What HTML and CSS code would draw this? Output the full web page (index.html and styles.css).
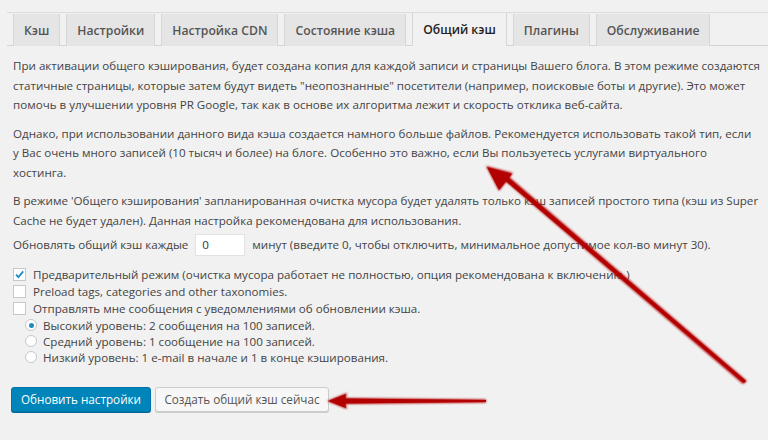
FILE: index.html
```html
<!DOCTYPE html>
<html lang="ru">
<head>
<meta charset="utf-8">
<title>WP Super Cache</title>
<link rel="stylesheet" href="styles.css">
</head>
<body>
<div class="page">
  <nav class="tabs">
    <span class="tab">Кэш</span>
    <span class="tab">Настройки</span>
    <span class="tab">Настройка CDN</span>
    <span class="tab">Состояние кэша</span>
    <span class="tab active">Общий кэш</span>
    <span class="tab">Плагины</span>
    <span class="tab">Обслуживание</span>
  </nav>
  <main class="content">
    <p>При активации общего кэширования, будет создана копия для каждой записи и страницы Вашего блога. В этом режиме создаются статичные страницы, которые затем будут видеть "неопознанные" посетители (например, поисковые боты и другие). Это может помочь в улучшении уровня PR Google, так как в основе их алгоритма лежит и скорость отклика веб-сайта.</p>
    <p>Однако, при использовании данного вида кэша создается намного больше файлов. Рекомендуется использовать такой тип, если у Вас очень много записей (10 тысяч и более) на блоге. Особенно это важно, если Вы пользуетесь услугами виртуального хостинга.</p>
    <p>В режиме 'Общего кэширования' запланированная очистка мусора будет удалять только кэш записей простого типа (кэш из Super Cache не будет удален). Данная настройка рекомендована для использования.</p>
    <p class="interval">Обновлять общий кэш каждые <span class="num-input">0</span> минут (введите 0, чтобы отключить, минимальное допустимое кол-во минут 30).</p>
    <div class="options">
      <label class="opt"><span class="cb checked"><svg viewBox="0 0 12 12" width="11" height="11"><path d="M2.2 6.2 L4.8 8.8 L10 2.6" fill="none" stroke="#1e8cbe" stroke-width="2"/></svg></span>Предварительный режим (очистка мусора работает не полностью, опция рекомендована к включению.)</label>
      <label class="opt"><span class="cb"></span>Preload tags, categories and other taxonomies.</label>
      <label class="opt"><span class="cb"></span>Отправлять мне сообщения с уведомлениями об обновлении кэша.</label>
      <label class="opt sub"><span class="rb checked"></span>Высокий уровень: 2 сообщения на 100 записей.</label>
      <label class="opt sub"><span class="rb"></span>Средний уровень: 1 сообщение на 100 записей.</label>
      <label class="opt sub"><span class="rb"></span>Низкий уровень: 1 e-mail в начале и 1 в конце кэширования.</label>
    </div>
    <div class="actions">
      <span class="btn primary">Обновить настройки</span>
      <span class="btn secondary">Создать общий кэш сейчас</span>
    </div>
  </main>
  <svg class="arrows" width="768" height="440" viewBox="0 0 768 440">
    <defs>
      <filter id="glow" x="-10%" y="-10%" width="120%" height="120%">
        <feGaussianBlur stdDeviation="0.8"/>
      </filter>
    </defs>
    <g fill="#b30000" filter="url(#glow)">
      <polygon points="486,166 513,173 499,191"/>
      <polygon points="504,180 508,176 747,381 743,384"/>
      <polygon points="327,401 347,393 345,401 347,409"/>
      <polygon points="343,398 486,399.5 486,402.5 343,404"/>
    </g>
    <g fill="#b30000">
      <polygon points="487,167 512,174 499,190"/>
      <polygon points="504.5,180 507.5,177 746,381 744,383"/>
      <polygon points="328,401 346,394 344.5,401 346,408"/>
      <polygon points="343,398.5 486,400 486,402 343,403.5"/>
    </g>
  </svg>
</div>
</body>
</html>
```
FILE: styles.css
```css
html, body {
  margin: 0;
  padding: 0;
  background: #f1f1f1;
}
.page {
  position: relative;
  width: 768px;
  height: 440px;
  overflow: hidden;
  font-family: "Open Sans", "Noto Sans", sans-serif;
  color: #444;
}
.tabs {
  display: flex;
  gap: 6px;
  margin: 12px 0 0 7px;
  padding-left: 6px;
  border-top: 1px solid #dcdcdc;
  border-bottom: 1px solid #d4d4d4;
  height: 32px;
  align-items: flex-end;
}
.tab {
  box-sizing: border-box;
  height: 32px;
  padding: 0 10px;
  display: flex;
  align-items: center;
  white-space: nowrap;
  font-size: 12.2px;
  font-weight: 600;
  color: #555;
  background: #e5e5e5;
  border: 1px solid #d6d6d6;
  border-top: none;
  border-bottom: none;
  margin-bottom: -1px;
}
.tab.active {
  background: #f1f1f1;
  color: #222;
  height: 33px;
}
.content {
  padding: 10px 8px 0 13px;
  font-size: 11.6px;
  line-height: 19.5px;
}
.content p {
  margin: 0 0 9px;
}
.interval {
  display: flex;
  align-items: center;
  white-space: pre;
  margin-top: -5px !important;
  margin-bottom: 10px !important;
}
.num-input {
  box-sizing: border-box;
  width: 50px;
  height: 22px;
  background: #fff;
  border: 1px solid #e2e2e2;
  padding: 0 6px;
  margin: 0 4px 0 4px;
  line-height: 20px;
  color: #333;
}
.options {
  display: flex;
  flex-direction: column;
}
.opt {
  display: flex;
  align-items: center;
  height: 17px;
  line-height: 17px;
  white-space: nowrap;
}
.opt.sub {
  padding-left: 12px;
  height: 16px;
}
.cb {
  box-sizing: border-box;
  width: 13px;
  height: 13px;
  background: #fff;
  border: 1px solid #c8c8c8;
  margin-right: 7px;
  display: flex;
  align-items: center;
  justify-content: center;
  flex: none;
}
.rb {
  box-sizing: border-box;
  width: 12px;
  height: 12px;
  border-radius: 50%;
  background: #fff;
  border: 1px solid #c8c8c8;
  margin-right: 6px;
  display: flex;
  align-items: center;
  justify-content: center;
  flex: none;
}
.rb.checked::after {
  content: "";
  width: 5px;
  height: 5px;
  border-radius: 50%;
  background: #1e8cbe;
}
.actions {
  display: flex;
  gap: 4px;
  margin-top: 22px;
  margin-left: -2px;
}
.btn {
  box-sizing: border-box;
  height: 25px;
  display: flex;
  align-items: center;
  justify-content: center;
  white-space: nowrap;
  font-size: 11.7px;
  border-radius: 3px;
}
.btn.primary {
  background: #0085ba;
  border: 1px solid #0073aa;
  color: #fff;
  box-shadow: 0 1px 0 #006799;
  width: 140px;
}
.btn.secondary {
  background: #f7f7f7;
  border: 1px solid #cccccc;
  color: #555;
  box-shadow: 0 1px 0 #ccc;
  width: 174px;
}
.arrows {
  position: absolute;
  left: 0;
  top: 0;
  pointer-events: none;
}
```
